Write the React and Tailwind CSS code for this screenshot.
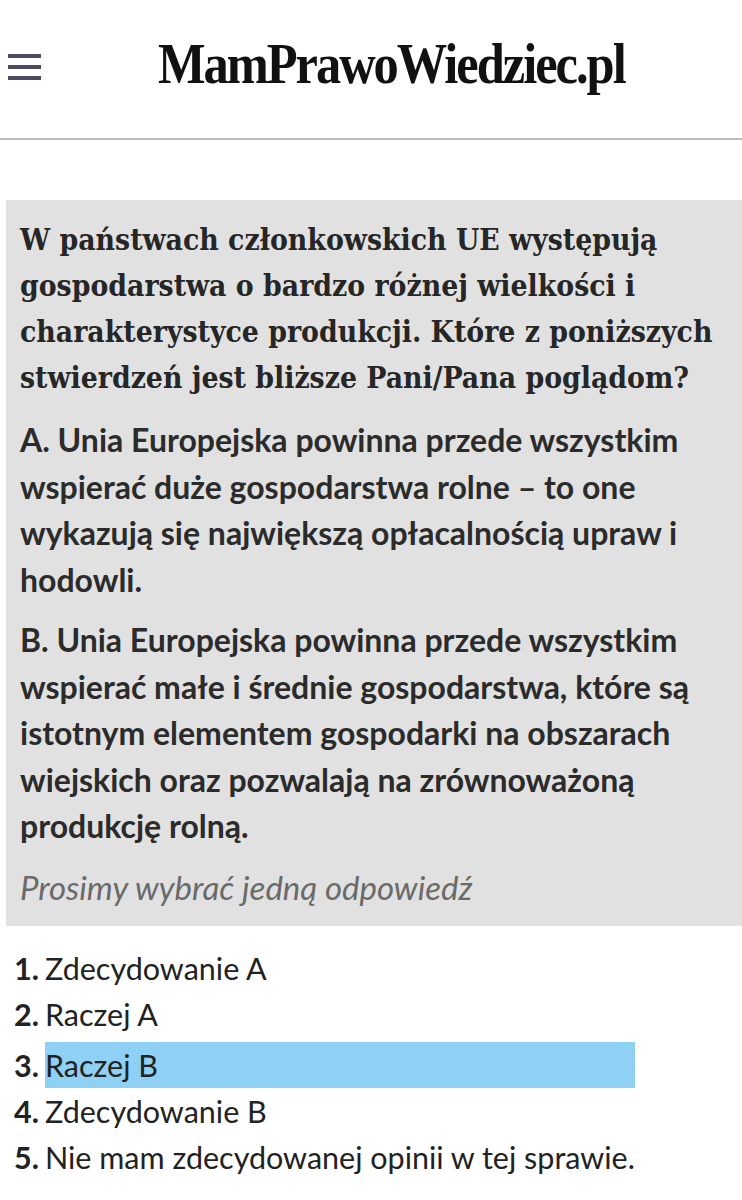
import React from 'react'

const options = [
  'Zdecydowanie A',
  'Raczej A',
  'Raczej B',
  'Zdecydowanie B',
  'Nie mam zdecydowanej opinii w tej sprawie.',
]

function Header() {
  return (
    <header className="h-[140px] border-b-2 border-[#bdbdbd] flex items-center">
      <button className="pl-[8px] w-[41px] flex flex-col gap-[7px] -mt-[4px]" aria-label="menu">
        <span className="block h-[4px] w-[33px] bg-[#4a4b5f]" />
        <span className="block h-[4px] w-[33px] bg-[#4a4b5f]" />
        <span className="block h-[4px] w-[33px] bg-[#4a4b5f]" />
      </button>
      <div className="flex-1 flex justify-center -mt-[10px]">
        <h1 className="font-['Liberation_Serif',serif] font-bold text-[56px] leading-none tracking-[-2.2px] scale-x-[0.9] text-[#111]">
          MamPrawoWiedziec.pl
        </h1>
      </div>
    </header>
  )
}

export default function App() {
  const selected = 2

  return (
    <div className="bg-white min-h-screen w-[742px] overflow-hidden text-[#2a2a2a]">
      <Header />

      <main className="pt-[60px]">
        <section className="ml-[6px] bg-[#e1e1e1] pl-[14px] pr-[10px] pt-[17px] pb-[16px]">
          <p className="font-['DejaVu_Serif_Condensed','DejaVu_Serif',serif] font-bold text-[29.8px] leading-[46px] text-[#262626]">
            W państwach członkowskich UE występują gospodarstwa o bardzo różnej wielkości i
            charakterystyce produkcji. Które z poniższych stwierdzeń jest bliższe Pani/Pana poglądom?
          </p>
          <p className="mt-[16px] font-['Lato',sans-serif] font-bold text-[32px] leading-[46.5px] text-[#2b2b2b]">
            A. Unia Europejska powinna przede wszystkim wspierać duże gospodarstwa rolne – to one
            wykazują się największą opłacalnością upraw i hodowli.
          </p>
          <p className="mt-[14px] font-['Lato',sans-serif] font-bold text-[32px] leading-[46.5px] text-[#2b2b2b]">
            B. Unia Europejska powinna przede wszystkim wspierać małe i średnie gospodarstwa, które są
            istotnym elementem gospodarki na obszarach wiejskich oraz pozwalają na zrównoważoną
            produkcję rolną.
          </p>
          <p className="mt-[14px] font-['Lato',sans-serif] italic text-[33px] leading-[46px] text-[#6a6a6a]">
            Prosimy wybrać jedną odpowiedź
          </p>
        </section>

        {/* lista odpowiedzi */}
        <ol className="mt-[19px] pl-[14px] grid grid-cols-[auto_auto] justify-start font-['Lato',sans-serif] text-[30.5px] leading-[46px] text-[#222]">
          {options.map((label, i) => (
            <li key={label} className="contents">
              <span className={`font-bold pr-[6px] ${i === selected ? 'mt-[5px]' : ''}`}>{i + 1}.</span>
              <span className={i === selected ? 'bg-[#8ed1f5] mt-[5px]' : ''}>{label}</span>
            </li>
          ))}
        </ol>
      </main>
    </div>
  )
}
